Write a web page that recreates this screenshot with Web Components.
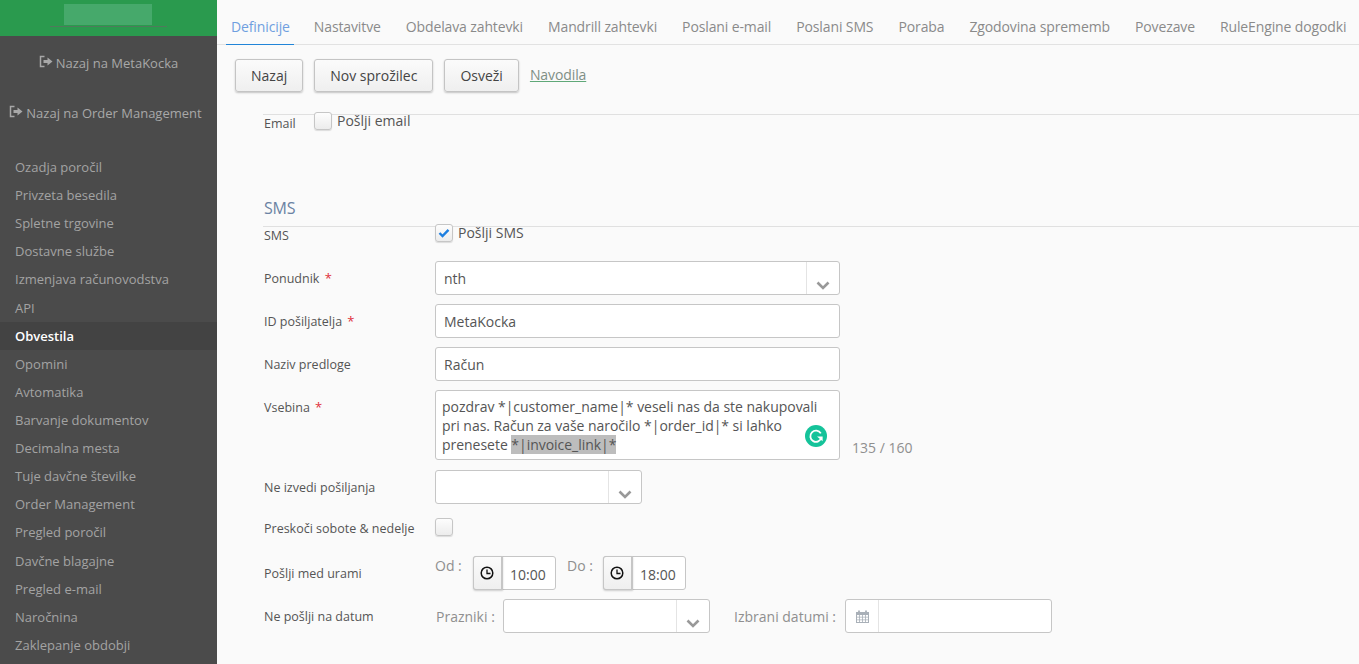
<!DOCTYPE html>
<html lang="sl">
<head>
<meta charset="utf-8">
<title>Obvestila</title>
<style>
  html, body { margin: 0; height: 100%; overflow: hidden; }
  body { font-family: "Open Sans", "Liberation Sans", sans-serif; font-size: 13px; color: #555; background: #fafafa; }
  .shell { display: flex; height: 664px; }
</style>
</head>
<body>
<div class="shell">
  <side-nav></side-nav>
  <main-panel></main-panel>
</div>

<script>
/* shared bits */
const SVG_CHEVRON = `<svg width="14" height="9" viewBox="0 0 14 9"><path d="M1.5 1.5 7 7l5.5-5.5" fill="none" stroke="#999" stroke-width="2.6"/></svg>`;

class SideNav extends HTMLElement {
  constructor() {
    super();
    this.attachShadow({ mode: 'open' });
    const items = ['Ozadja poročil', 'Privzeta besedila', 'Spletne trgovine', 'Dostavne službe',
      'Izmenjava računovodstva', 'API', 'Obvestila', 'Opomini', 'Avtomatika', 'Barvanje dokumentov',
      'Decimalna mesta', 'Tuje davčne številke', 'Order Management', 'Pregled poročil',
      'Davčne blagajne', 'Pregled e-mail', 'Naročnina', 'Zaklepanje obdobji'];
    const exit = `<svg width="14" height="14" viewBox="0 0 14 14"><path d="M5.5 1.5H1.5v10h4" fill="none" stroke="currentColor" stroke-width="1.5"/><path d="M4.5 5h4V2.5L13.5 6.5l-5 4V8h-4z" fill="currentColor"/></svg>`;
    this.shadowRoot.innerHTML = /*html*/ `
      <style>
        :host { display: flex; flex-direction: column; flex: 0 0 217px; width: 217px; height: 664px; overflow: hidden;
          background: #4b4b4b; color: #a3a3a3; font-size: 13px; }
        #brand { height: 36px; flex: none; background: #2a9a4e; display: flex; flex-direction: column; align-items: center; padding-top: 4px; box-sizing: border-box; }
        #logo { width: 88px; height: 21px; background: #46a96b; margin-right: 2px; }
        #logoLine { width: 117px; height: 1px; background: #4f7a5c; margin-top: 1px; }
        .back { display: flex; justify-content: center; align-items: center; gap: 3px; height: 20px; color: #a8a8a8; }
        .back svg { position: relative; top: -1px; }
        #b1 { margin-top: 17px; }
        #b2 { margin-top: 30px; margin-right: 6px; }
        ul { list-style: none; margin: 30px 0 0; padding: 0; }
        li { height: 28.12px; line-height: 28px; padding-left: 15px; }
        li.active { background: #434343; color: #fff; font-weight: 600; }
      </style>
      <div id="brand"><div id="logo"></div><div id="logoLine"></div></div>
      <div class="back" id="b1">${exit}<span>Nazaj na MetaKocka</span></div>
      <div class="back" id="b2">${exit}<span>Nazaj na Order Management</span></div>
      <ul>${items.map(i => `<li class="${i === 'Obvestila' ? 'active' : ''}">${i}</li>`).join('')}</ul>
    `;
  }
}
customElements.define('side-nav', SideNav);

class TabBar extends HTMLElement {
  constructor() {
    super();
    this.attachShadow({ mode: 'open' });
    const tabs = [['Definicije', 0], ['Nastavitve', 15], ['Obdelava zahtevki', 16], ['Mandrill zahtevki', 16],
      ['Poslani e-mail', 16], ['Poslani SMS', 16], ['Poraba', 16], ['Zgodovina sprememb', 16], ['Povezave', 16], ['RuleEngine dogodki', 16]];
    this.shadowRoot.innerHTML = /*html*/ `
      <style>
        :host { display: flex; height: 45px; box-sizing: border-box; padding-left: 9px; border-bottom: 1px solid #e2e2e2; font-size: 14px; letter-spacing: -0.12px; }
        a { display: block; height: 45px; box-sizing: border-box; padding: 17px 4px 0 5px; line-height: 20px; color: #8a8a8a; white-space: nowrap; }
        a.on { color: #6f9fe0; border-bottom: 1px solid #2185d8; }
      </style>
      ${tabs.map(([t, m], i) => `<a class="${i === 0 ? 'on' : ''}" style="margin-left:${m}px">${t}</a>`).join('')}
    `;
  }
}
customElements.define('tab-bar', TabBar);

class AppButton extends HTMLElement {
  constructor() {
    super();
    this.attachShadow({ mode: 'open' });
    this.shadowRoot.innerHTML = /*html*/ `
      <style>
        :host { display: block; height: 33px; box-sizing: border-box; padding: 0 15px; line-height: 31px; font-size: 14px; color: #444;
          border: 1px solid #c4c4c4; border-radius: 3px; background: linear-gradient(#fbfbfb, #efefef); box-shadow: 0 1px 2px rgba(0,0,0,.22); white-space: nowrap; }
      </style>
      <slot></slot>
    `;
  }
}
customElements.define('app-button', AppButton);

class CheckBox extends HTMLElement {
  constructor() {
    super();
    this.attachShadow({ mode: 'open' });
    const mark = this.hasAttribute('checked')
      ? `<svg width="12" height="10" viewBox="0 0 12 10"><path d="M1.5 5 4.5 8 10.5 1.8" fill="none" stroke="#1d7fe0" stroke-width="2.4"/></svg>` : '';
    this.shadowRoot.innerHTML = /*html*/ `
      <style>
        :host { display: flex; align-items: flex-start; font-size: 14px; color: #555; }
        #box { width: 18px; height: 18px; box-sizing: border-box; border: 1px solid #c6c6c6; border-radius: 3px; background: linear-gradient(#fdfdfd, #ececec);
          box-shadow: 0 1px 1px rgba(0,0,0,.12); display: flex; align-items: center; justify-content: center; flex: none; }
        #text { margin-left: 5px; line-height: 18px; }
      </style>
      <div id="box">${mark}</div><div id="text"><slot></slot></div>
    `;
  }
}
customElements.define('check-box', CheckBox);

/* input look-alikes: text, select and time/date with addon */
class FieldBox extends HTMLElement {
  constructor() {
    super();
    this.attachShadow({ mode: 'open' });
    const w = this.getAttribute('width') || 405;
    const kind = this.getAttribute('kind') || 'text';
    let addon = '';
    if (kind === 'time') addon = `<div id="addon" class="time"><svg width="14" height="14" viewBox="0 0 14 14"><circle cx="7" cy="7" r="5.8" fill="none" stroke="#111" stroke-width="1.5"/><path d="M7 3.5V7.5H10.5" fill="none" stroke="#111" stroke-width="1.3"/></svg></div>`;
    if (kind === 'date') addon = `<div id="addon" class="date"><svg width="15" height="15" viewBox="0 0 15 15"><path d="M1 3h13v11H1z" fill="#a9b0b8"/><g fill="#fff"><path d="M2 6h2.2v1.8H2zM5 6h2.2v1.8H5zM8 6h2.2v1.8H8zM11 6h2v1.8h-2zM2 8.6h2.2v1.8H2zM5 8.6h2.2v1.8H5zM8 8.6h2.2v1.8H8zM11 8.6h2v1.8h-2zM2 11.2h2.2V13H2zM5 11.2h2.2V13H5zM8 11.2h2.2V13H8zM11 11.2h2V13h-2z"/></g><path d="M4 1.5v2.5M11 1.5v2.5" stroke="#a9b0b8" stroke-width="1.8"/></svg></div>`;
    const arrow = kind === 'select' ? `<div id="arrow">${SVG_CHEVRON}</div>` : '';
    this.shadowRoot.innerHTML = /*html*/ `
      <style>
        :host { display: flex; width: ${w}px; height: 34px; box-sizing: border-box; border: 1px solid #c6c6c6; border-radius: 3px; background: #fff; font-size: 14px; color: #555; flex: none; }
        #val { flex: 1; padding-left: 8px; line-height: 34px; white-space: nowrap; overflow: hidden; }
        #arrow { width: 33px; border-left: 1px solid #e4e4e4; display: flex; justify-content: center; align-items: flex-end; padding-bottom: 4px; box-sizing: border-box; }
        #addon { display: flex; align-items: center; justify-content: center; box-sizing: border-box; flex: none; }
        #addon.time { width: 30px; margin: -1px 0 -1px -1px; border: 1px solid #c6c6c6; border-right-width: 2px; border-radius: 3px 0 0 3px; background: linear-gradient(#fbfbfb, #efefef); box-shadow: 0 1px 2px rgba(0,0,0,.18); padding-right: 1px; }
        #addon.date { width: 33px; border-right: 1px solid #e4e4e4; }
        :host([kind=time]) #val { padding-left: 7px; line-height: 35px; }
      </style>
      ${addon}<div id="val"><slot></slot></div>${arrow}
    `;
  }
}
customElements.define('field-box', FieldBox);

class FormRow extends HTMLElement {
  constructor() {
    super();
    this.attachShadow({ mode: 'open' });
    const req = this.hasAttribute('required') ? '<b>*</b>' : '';
    this.shadowRoot.innerHTML = /*html*/ `
      <style>
        :host { display: grid; grid-template-columns: 171px 1fr; align-items: start; font-size: 12.5px; color: #555; }
        #label { padding-top: var(--label-top, 9px); line-height: 17px; white-space: nowrap; }
        b { color: #e0303a; font-weight: 400; font-size: 13px; margin-left: 2px; }
        #ctl { display: flex; align-items: flex-start; min-width: 0; }
      </style>
      <div id="label">${this.getAttribute('label')} ${req}</div>
      <div id="ctl"><slot></slot></div>
    `;
  }
}
customElements.define('form-row', FormRow);

class MessageArea extends HTMLElement {
  constructor() {
    super();
    this.attachShadow({ mode: 'open' });
    this.shadowRoot.innerHTML = /*html*/ `
      <style>
        :host { display: block; position: relative; width: 405px; height: 70px; box-sizing: border-box; flex: none; padding: 6px 0 0 6px;
          border: 1px solid #c6c6c6; border-radius: 3px; background: #fff; font-size: 14px; line-height: 19px; color: #555; letter-spacing: -0.03px; }
        mark { background: #bdbdbd; color: #555; }
        #g { position: absolute; right: 12px; top: 34px; width: 22px; height: 22px; }
      </style>
      pozdrav *|customer_name|* veseli nas da ste nakupovali<br>
      pri nas. Račun za vaše naročilo *|order_id|* si lahko<br>
      prenesete <mark>*|invoice_link|*</mark>
      <svg id="g" viewBox="0 0 22 22"><circle cx="11" cy="11" r="11" fill="#15c39a"/><path d="M15.8 8.4A5.6 5.6 0 1 0 16.4 12.5" fill="none" stroke="#fff" stroke-width="1.8"/><path d="M12 11.6h5.6v4.6z" fill="#fff"/></svg>
    `;
  }
}
customElements.define('message-area', MessageArea);

class MainPanel extends HTMLElement {
  constructor() {
    super();
    this.attachShadow({ mode: 'open' });
    this.shadowRoot.innerHTML = /*html*/ `
      <style>
        :host { display: block; flex: 1; min-width: 0; height: 664px; overflow: hidden; }
        #actions { display: flex; align-items: flex-start; gap: 11px; margin: 14px 0 0 18px; height: 33px; }
        #actions a { color: #7f8f86; text-decoration: underline; text-decoration-color: #5fa878; font-size: 14px; line-height: 32px; letter-spacing: -0.1px; }
        #form { margin: 22px 0 0 46px; }
        .emailRow { display: flex; border-top: 1px solid #e0e0e0; padding-left: 1px; }
        .emailRow span { font-size: 12.5px; line-height: 17px; padding-top: 0; width: 50px; margin-top: 0; }
        #smsTitle { margin: 60px 0 0 1px; height: 34px; font-size: 16px; line-height: 32px; color: #6b82a3; letter-spacing: -0.2px; }
        #rows { border-top: 1px solid #e0e0e0; padding-left: 1px; display: flex; flex-direction: column; }
        .g { color: #8f8f8f; font-size: 14px; white-space: nowrap; }
      </style>
      <tab-bar></tab-bar>
      <div id="actions">
        <app-button>Nazaj</app-button>
        <app-button>Nov sprožilec</app-button>
        <app-button>Osveži</app-button>
        <a>Navodila</a>
      </div>
      <div id="form">
        <div class="emailRow">
          <span style="padding-top:0"><span style="display:block;width:auto;padding-top:0;position:relative;top:0;margin-top:0;line-height:17px;transform:translateY(0)">&nbsp;</span></span>
        </div>
        <form-row label="Email" style="--label-top:0px;margin-top:-17px;padding-left:1px;grid-template-columns:50px 1fr">
          <check-box style="margin-top:-3px">Pošlji email</check-box>
        </form-row>
        <div id="smsTitle">SMS</div>
        <div id="rows">
          <form-row label="SMS" style="--label-top:0px">
            <check-box checked style="margin-top:-3px">Pošlji SMS</check-box>
          </form-row>
          <form-row label="Ponudnik" required style="margin-top:17px">
            <field-box kind="select">nth</field-box>
          </form-row>
          <form-row label="ID pošiljatelja" required style="margin-top:9px">
            <field-box>MetaKocka</field-box>
          </form-row>
          <form-row label="Naziv predloge" style="margin-top:9px">
            <field-box>Račun</field-box>
          </form-row>
          <form-row label="Vsebina" required style="margin-top:9px">
            <message-area></message-area>
            <span class="g" style="margin:48px 0 0 12px">135 / 160</span>
          </form-row>
          <form-row label="Ne izvedi pošiljanja" style="margin-top:10px">
            <field-box kind="select" width="207"></field-box>
          </form-row>
          <form-row label="Preskoči sobote &amp; nedelje" style="margin-top:14px;--label-top:2px">
            <check-box></check-box>
          </form-row>
          <form-row label="Pošlji med urami" style="margin-top:19px">
            <span class="g" style="margin-top:0;width:38px;line-height:20px">Od :</span>
            <field-box kind="time" width="83">10:00</field-box>
            <span class="g" style="margin:0 0 0 11px;width:36px;line-height:20px">Do :</span>
            <field-box kind="time" width="83">18:00</field-box>
          </form-row>
          <form-row label="Ne pošlji na datum" style="margin-top:9px">
            <span class="g" style="margin:8px 0 0 1px;width:67px;line-height:20px">Prazniki :</span>
            <field-box kind="select" width="207"></field-box>
            <span class="g" style="margin:8px 0 0 24px;width:111px;line-height:20px">Izbrani datumi :</span>
            <field-box kind="date" width="207"></field-box>
          </form-row>
        </div>
      </div>
    `;
  }
}
customElements.define('main-panel', MainPanel);
</script>
</body>
</html>
